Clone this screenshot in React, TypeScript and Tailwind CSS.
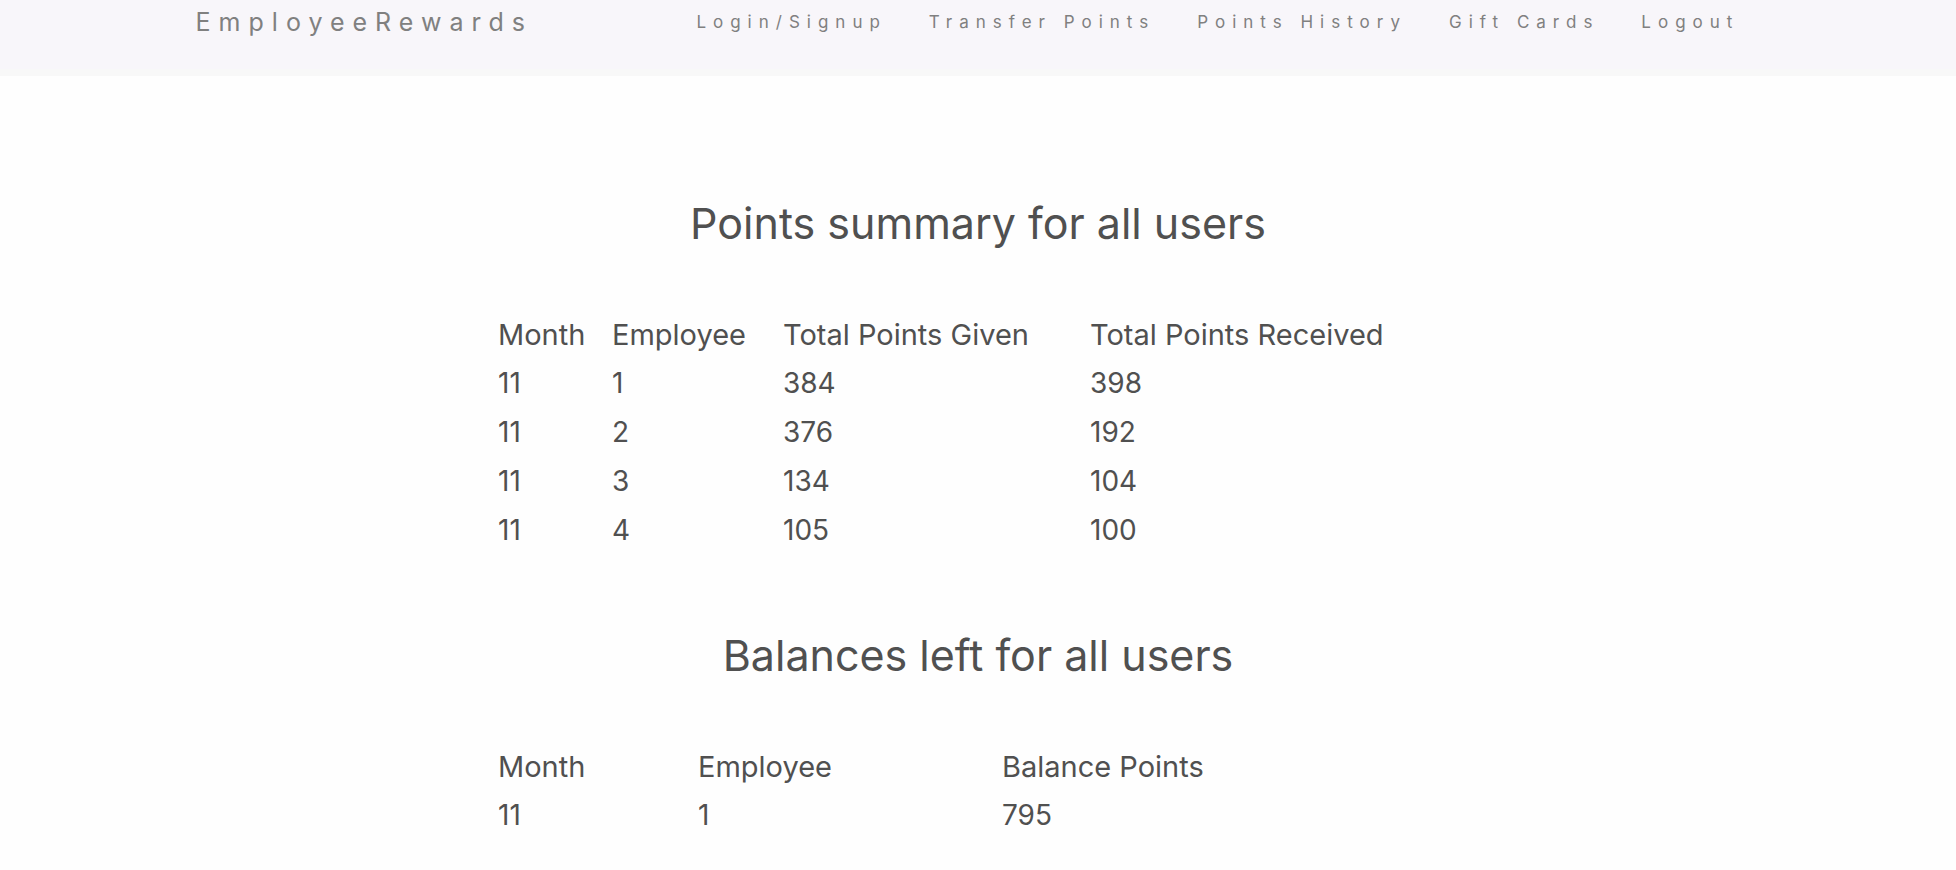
const links = ["Login/Signup", "Transfer Points", "Points History", "Gift Cards", "Logout"];

type TableProps = {
  id: string;
  title: string;
  columns: { label: string; width: string }[];
  rows: number[][];
};

function PointsTable({ id, title, columns, rows }: TableProps) {
  return (
    <section aria-labelledby={id}>
      <h2 id={id} className="text-center text-[43px] leading-[50px] font-normal">
        {title}
      </h2>
      <table className="mt-[62px] w-full table-fixed text-left text-[28px] leading-[49px]">
        <thead>
          <tr>
            {columns.map((column) => (
              <th
                key={column.label}
                scope="col"
                className={`pl-[9px] text-[29px] font-normal whitespace-nowrap ${column.width}`}
              >
                {column.label}
              </th>
            ))}
          </tr>
        </thead>
        <tbody>
          {rows.map((row, index) => (
            <tr key={index}>
              {row.map((value, cell) => (
                <td key={cell} className="pl-[9px]">
                  {value}
                </td>
              ))}
            </tr>
          ))}
        </tbody>
      </table>
    </section>
  );
}

export default function App() {
  return (
    <div className="min-h-screen bg-[#fefefe] font-['Inter',sans-serif] text-[#505050]">
      <header className="flex items-start justify-between border-b-7 border-[#f8f8f8] bg-[#f8f6fa] px-[10%] pb-6 text-[#808080]">
        <a href="#" className="text-[25px] leading-[45px] tracking-[8px]">
          EmployeeRewards
        </a>
        <nav className="flex">
          {links.map((link) => (
            <a key={link} href="#" className="px-[21px] text-[17px] leading-[45px] tracking-[7px] whitespace-nowrap">
              {link}
            </a>
          ))}
        </nav>
      </header>
      <main className="flex flex-col gap-[75px] px-[25%] pt-[122px]">
        <PointsTable
          id="summary"
          title="Points summary for all users"
          columns={[
            { label: "Month", width: "w-[114px]" },
            { label: "Employee", width: "w-[171px]" },
            { label: "Total Points Given", width: "w-[307px]" },
            { label: "Total Points Received", width: "w-auto" },
          ]}
          rows={[
            [11, 1, 384, 398],
            [11, 2, 376, 192],
            [11, 3, 134, 104],
            [11, 4, 105, 100],
          ]}
        />
        <PointsTable
          id="balances"
          title="Balances left for all users"
          columns={[
            { label: "Month", width: "w-[200px]" },
            { label: "Employee", width: "w-[304px]" },
            { label: "Balance Points", width: "w-auto" },
          ]}
          rows={[[11, 1, 795]]}
        />
      </main>
    </div>
  );
}
